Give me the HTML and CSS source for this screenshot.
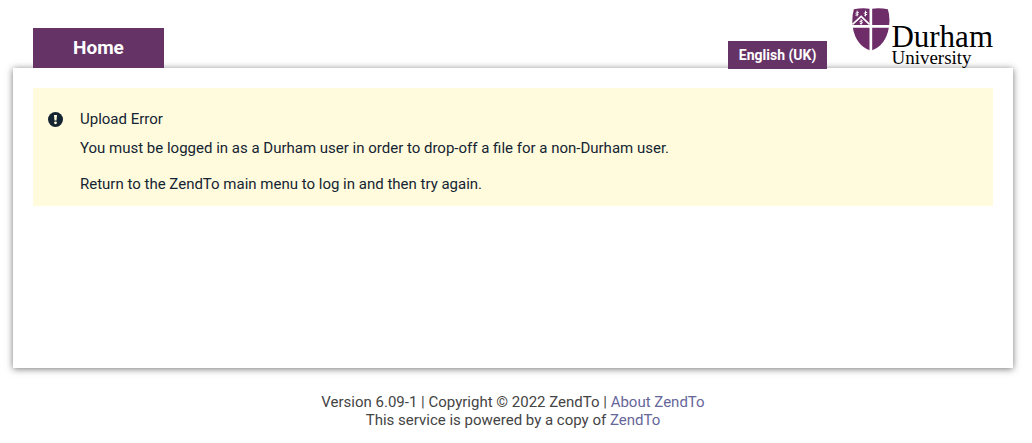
FILE: index.html
```html
<!DOCTYPE html>
<html lang="en-GB">

<head>
    <meta charset="UTF-8">
    <meta name="viewport" content="width=device-width, initial-scale=1.0">
    <title>ZendTo - Upload Error</title>
    <link rel="stylesheet" href="styles.css">
</head>

<body>

    <header class="header">
        <nav class="menu">
            <a class="menu-item" href="#">Home</a>
        </nav>
        <button class="language" type="button">English (UK)</button>
        <a class="logo" href="#">
            <svg class="shield" viewBox="24 18 113 129" aria-hidden="true">
                <g fill="#6e2c68">
                    <path d="M29 22Q52 17 76 20V69H25Q23 43 29 22Z" />
                    <path d="M84 20Q108 17 131 22Q138 43 135 69H84Z" />
                    <path d="M26 77H76V145Q35 128 26 77Z" />
                    <path d="M84 77H134Q125 128 84 145Z" />
                </g>
                <path d="M25 67L51 43L76 67" fill="none" stroke="#fff" stroke-width="5" />
                <g fill="none" stroke="#fff" stroke-width="3">
                    <path d="M39 26V43M34 34L44 31M34 40L43 37" />
                    <path d="M64 26V43M59 34L69 31M60 40L69 37" />
                    <path d="M51 52V68M46 59L56 56M47 65L56 62" />
                </g>
            </svg>
            <span class="logo-text">
                <span class="logo-name">Durham</span>
                <span class="logo-type">University</span>
            </span>
        </a>
    </header>

    <main class="content">
        <section class="error">
            <svg class="error-icon" viewBox="0 0 15 15" aria-hidden="true">
                <circle cx="7.5" cy="7.5" r="7.5" fill="#142433" />
                <path d="M6 3H9L8.5 8.5H6.5Z" fill="#fffbdc" />
                <circle cx="7.5" cy="10.8" r="1.4" fill="#fffbdc" />
            </svg>
            <div class="error-text">
                <h1>Upload Error</h1>
                <p>You must be logged in as a Durham user in order to drop-off a file for a non-Durham user.</p>
                <p>Return to the ZendTo main menu to log in and then try again.</p>
            </div>
        </section>
    </main>

    <footer class="footer">
        <p>Version 6.09-1 | Copyright © 2022 ZendTo | <a href="#">About ZendTo</a></p>
        <p>This service is powered by a copy of <a href="#">ZendTo</a></p>
    </footer>

</body>

</html>
```

FILE: styles.css
```css
* {
    box-sizing: border-box;
    margin: 0;
    padding: 0;
}

body {
    padding: 8px 19px 0 13px;
    background-color: #fff;
    color: #444;
    font-family: Roboto, sans-serif;
    font-size: 15px;
    line-height: 18px;
}

.header {
    display: flex;
    align-items: flex-end;
    height: 60px;
    padding: 0 20px;
}

.menu {
    flex: 1;
    display: flex;
}

.menu-item {
    padding: 0 40px;
    background-color: #663366;
    color: #fff;
    font-size: 19px;
    font-weight: bold;
    line-height: 40px;
    text-decoration: none;
}

.language {
    height: 28px;
    margin-right: 25px;
    margin-bottom: -1px;
    padding: 0 11px;
    border: none;
    background-color: #663366;
    color: #fff;
    font-family: inherit;
    font-size: 14px;
    font-weight: bold;
}

.logo {
    display: flex;
    align-self: flex-start;
    gap: 1px;
    color: #000;
    font-family: "Liberation Serif", serif;
    text-decoration: none;
}

.shield {
    width: 38px;
    height: 43px;
}

.logo-text {
    display: flex;
    flex-direction: column;
    padding-top: 16px;
}

.logo-name {
    font-size: 31px;
    line-height: 26px;
}

.logo-type {
    font-size: 19px;
    line-height: 16px;
}

.content {
    min-height: 300px;
    padding: 20px;
    box-shadow: 0 1px 7px #777;
}

.error {
    display: flex;
    gap: 17px;
    padding: 22px 15px 13px;
    background-color: #fffbdc;
    color: #142433;
}

.error-icon {
    flex: none;
    width: 15px;
    height: 15px;
    margin-top: 2px;
}

.error-text h1 {
    margin-bottom: 11px;
    font-size: 15px;
    font-weight: normal;
}

.error-text p + p {
    margin-top: 18px;
}

.footer {
    padding-top: 25px;
    text-align: center;
}

.footer a {
    color: #666699;
    text-decoration: none;
}
```
